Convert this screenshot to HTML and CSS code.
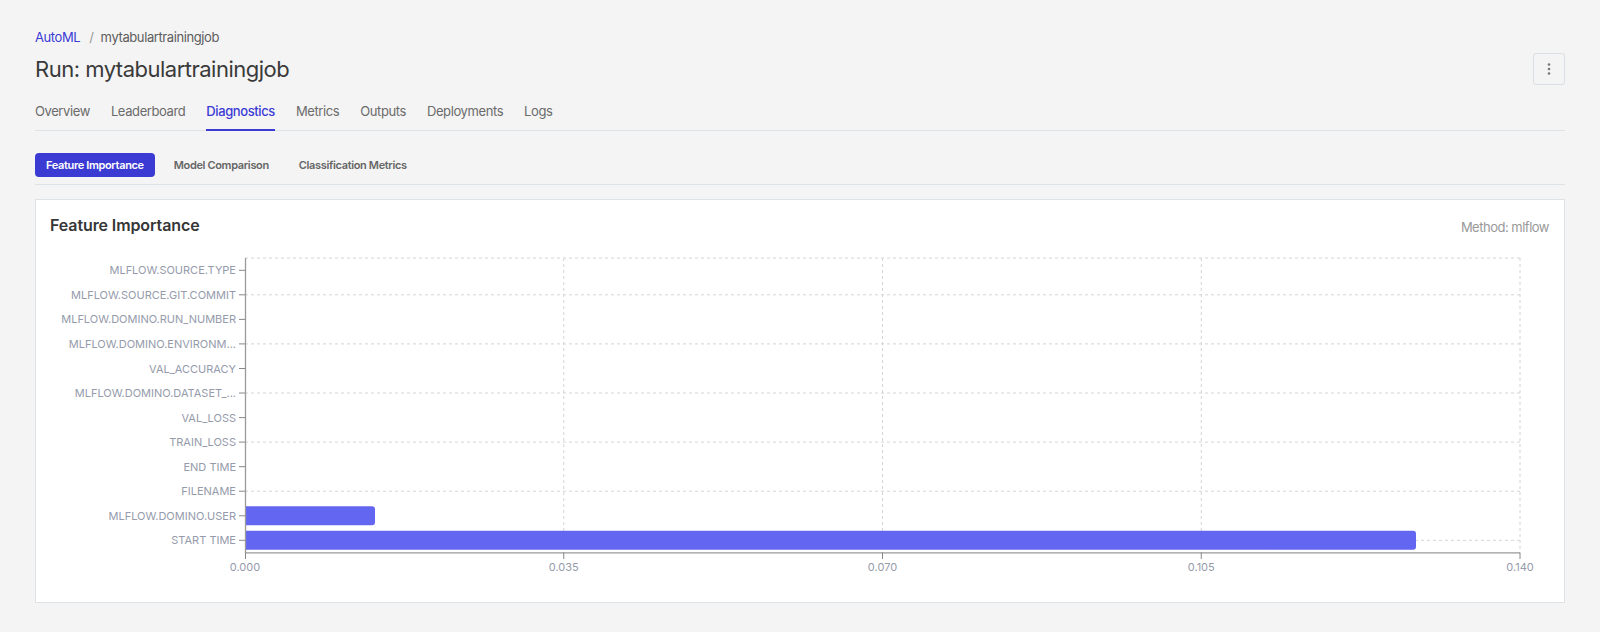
FILE: index.html
```html
<!DOCTYPE html>
<html lang="en">
<head>
    <meta charset="UTF-8">
    <meta name="viewport" content="width=device-width, initial-scale=1.0">
    <title>Run: mytabulartrainingjob</title>
    <link rel="stylesheet" href="styles.css">
</head>
<body>

    <!-- En-tête -->
    <div class="breadcrumb">
        <a href="#">AutoML</a>
        <span class="sep">/</span>
        <span>mytabulartrainingjob</span>
    </div>

    <div class="title-row">
        <h1>Run: mytabulartrainingjob</h1>
        <button class="kebab" aria-label="More">
            <svg width="16" height="16" viewBox="0 0 16 16">
                <circle cx="8" cy="3.5" r="1.3"/>
                <circle cx="8" cy="8" r="1.3"/>
                <circle cx="8" cy="12.5" r="1.3"/>
            </svg>
        </button>
    </div>

    <ul class="tabs">
        <li>Overview</li>
        <li>Leaderboard</li>
        <li class="active">Diagnostics</li>
        <li>Metrics</li>
        <li>Outputs</li>
        <li>Deployments</li>
        <li>Logs</li>
    </ul>

    <div class="subtabs">
        <button class="active">Feature Importance</button>
        <button>Model Comparison</button>
        <button>Classification Metrics</button>
    </div>

    <!-- Carte graphique -->
    <div class="card">
        <div class="card-head">
            <h2>Feature Importance</h2>
            <span class="method">Method: mlflow</span>
        </div>

        <svg class="chart" width="1498" height="340">
            <g class="grid">
                <line x1="194" y1="13" x2="1469" y2="13"/>
                <line x1="194" y1="49.8" x2="1469" y2="49.8"/>
                <line x1="194" y1="98.9" x2="1469" y2="98.9"/>
                <line x1="194" y1="148" x2="1469" y2="148"/>
                <line x1="194" y1="197.1" x2="1469" y2="197.1"/>
                <line x1="194" y1="246.2" x2="1469" y2="246.2"/>
                <line x1="194" y1="295.3" x2="1469" y2="295.3"/>
                <line x1="512.75" y1="13" x2="512.75" y2="307.6"/>
                <line x1="831.5" y1="13" x2="831.5" y2="307.6"/>
                <line x1="1150.25" y1="13" x2="1150.25" y2="307.6"/>
                <line x1="1469" y1="13" x2="1469" y2="307.6"/>
            </g>

            <g class="bars">
                <path d="M194 261.3 H321 A3 3 0 0 1 324 264.3 V277.3 A3 3 0 0 1 321 280.3 H194 Z"/>
                <path d="M194 285.8 H1362 A3 3 0 0 1 1365 288.8 V301.8 A3 3 0 0 1 1362 304.8 H194 Z"/>
            </g>

            <g class="axis">
                <line x1="194.5" y1="13" x2="194.5" y2="308"/>
                <line x1="194" y1="307.8" x2="1469" y2="307.8"/>
            </g>

            <g class="ticks">
                <line x1="188" y1="25.3" x2="194" y2="25.3"/>
                <line x1="188" y1="49.8" x2="194" y2="49.8"/>
                <line x1="188" y1="74.4" x2="194" y2="74.4"/>
                <line x1="188" y1="98.9" x2="194" y2="98.9"/>
                <line x1="188" y1="123.5" x2="194" y2="123.5"/>
                <line x1="188" y1="148" x2="194" y2="148"/>
                <line x1="188" y1="172.6" x2="194" y2="172.6"/>
                <line x1="188" y1="197.1" x2="194" y2="197.1"/>
                <line x1="188" y1="221.7" x2="194" y2="221.7"/>
                <line x1="188" y1="246.2" x2="194" y2="246.2"/>
                <line x1="188" y1="270.8" x2="194" y2="270.8"/>
                <line x1="188" y1="295.3" x2="194" y2="295.3"/>
                <line x1="194.5" y1="307.6" x2="194.5" y2="314"/>
                <line x1="512.75" y1="307.6" x2="512.75" y2="314"/>
                <line x1="831.5" y1="307.6" x2="831.5" y2="314"/>
                <line x1="1150.25" y1="307.6" x2="1150.25" y2="314"/>
                <line x1="1469" y1="307.6" x2="1469" y2="314"/>
            </g>

            <g class="y-labels">
                <text x="185" y="25.3">MLFLOW.SOURCE.TYPE</text>
                <text x="185" y="49.8">MLFLOW.SOURCE.GIT.COMMIT</text>
                <text x="185" y="74.4">MLFLOW.DOMINO.RUN_NUMBER</text>
                <text x="185" y="98.9">MLFLOW.DOMINO.ENVIRONM...</text>
                <text x="185" y="123.5">VAL_ACCURACY</text>
                <text x="185" y="148">MLFLOW.DOMINO.DATASET_...</text>
                <text x="185" y="172.6">VAL_LOSS</text>
                <text x="185" y="197.1">TRAIN_LOSS</text>
                <text x="185" y="221.7">END TIME</text>
                <text x="185" y="246.2">FILENAME</text>
                <text x="185" y="270.8">MLFLOW.DOMINO.USER</text>
                <text x="185" y="295.3">START TIME</text>
            </g>

            <g class="x-labels">
                <text x="194" y="322">0.000</text>
                <text x="512.75" y="322">0.035</text>
                <text x="831.5" y="322">0.070</text>
                <text x="1150.25" y="322">0.105</text>
                <text x="1469" y="322">0.140</text>
            </g>
        </svg>
    </div>

</body>
</html>
```

FILE: styles.css
```css
/* Base */
* { margin: 0; padding: 0; box-sizing: border-box; }
body { background: #f4f4f4; color: #3a3a3a; font-family: Inter, "Noto Sans", sans-serif; padding: 28px 35px 0; }

/* En-tête */
.breadcrumb { font-size: 13px; line-height: 18px; color: #5c5c5c; display: flex; letter-spacing: -0.4px; }
.breadcrumb a { color: #3b3bd4; text-decoration: none; }
.breadcrumb .sep { color: #999; margin: 0 7px 0 9px; }

.title-row { display: flex; align-items: center; justify-content: space-between; margin-top: 7px; height: 32px; }
.title-row h1 { font-size: 22px; font-weight: 400; color: #3a3a3a; line-height: 30px; letter-spacing: -0.5px; }
.kebab { width: 32px; height: 32px; border: 1px solid #d9dfe4; border-radius: 3px; background: #f4f4f4; display: flex; align-items: center; justify-content: center; cursor: pointer; }
.kebab svg { fill: #777; }

/* Onglets */
.tabs { list-style: none; display: flex; gap: 21px; margin-top: 17px; border-bottom: 1px solid #dce2e6; }
.tabs li { font-size: 13px; line-height: 18px; color: #6b6b6b; letter-spacing: -0.4px; padding-bottom: 9px; border-bottom: 2px solid transparent; margin-bottom: -1px; cursor: pointer; }
.tabs li.active { color: #3b3bd4; font-weight: 500; border-bottom-color: #3b3bd4; }

.subtabs { display: flex; gap: 8px; margin-top: 22px; padding-bottom: 7px; border-bottom: 1px solid #dce2e6; }
.subtabs button { font-family: inherit; font-size: 11px; font-weight: 600; letter-spacing: -0.35px; height: 24px; padding: 0 11px; border: none; border-radius: 4px; background: none; color: #666; cursor: pointer; }
.subtabs button.active { background: #3b3bd4; color: #fff; }

/* Carte */
.card { margin-top: 14px; background: #fff; border: 1px solid #dce2e6; padding: 14px 15px 17px; }
.card-head { display: flex; align-items: center; justify-content: space-between; height: 22px; }
.card-head h2 { font-size: 16px; font-weight: 600; color: #363636; margin-left: -1px; letter-spacing: -0.1px; }
.method { font-size: 13px; color: #999; padding-top: 3px; letter-spacing: -0.5px; }

/* Graphique */
.chart { display: block; margin-top: 9px; font-family: Inter, "Noto Sans", sans-serif; }
.grid line { stroke: #d4d4d4; stroke-dasharray: 3 3; }
.bars path { fill: #6366f1; }
.axis line { stroke: #9a9a9a; stroke-width: 1.3; }
.ticks line { stroke: #888; }
.y-labels text { font-size: 11px; fill: #959bab; text-anchor: end; dominant-baseline: central; }
.x-labels text { font-size: 11px; fill: #959bab; text-anchor: middle; dominant-baseline: central; }
```
